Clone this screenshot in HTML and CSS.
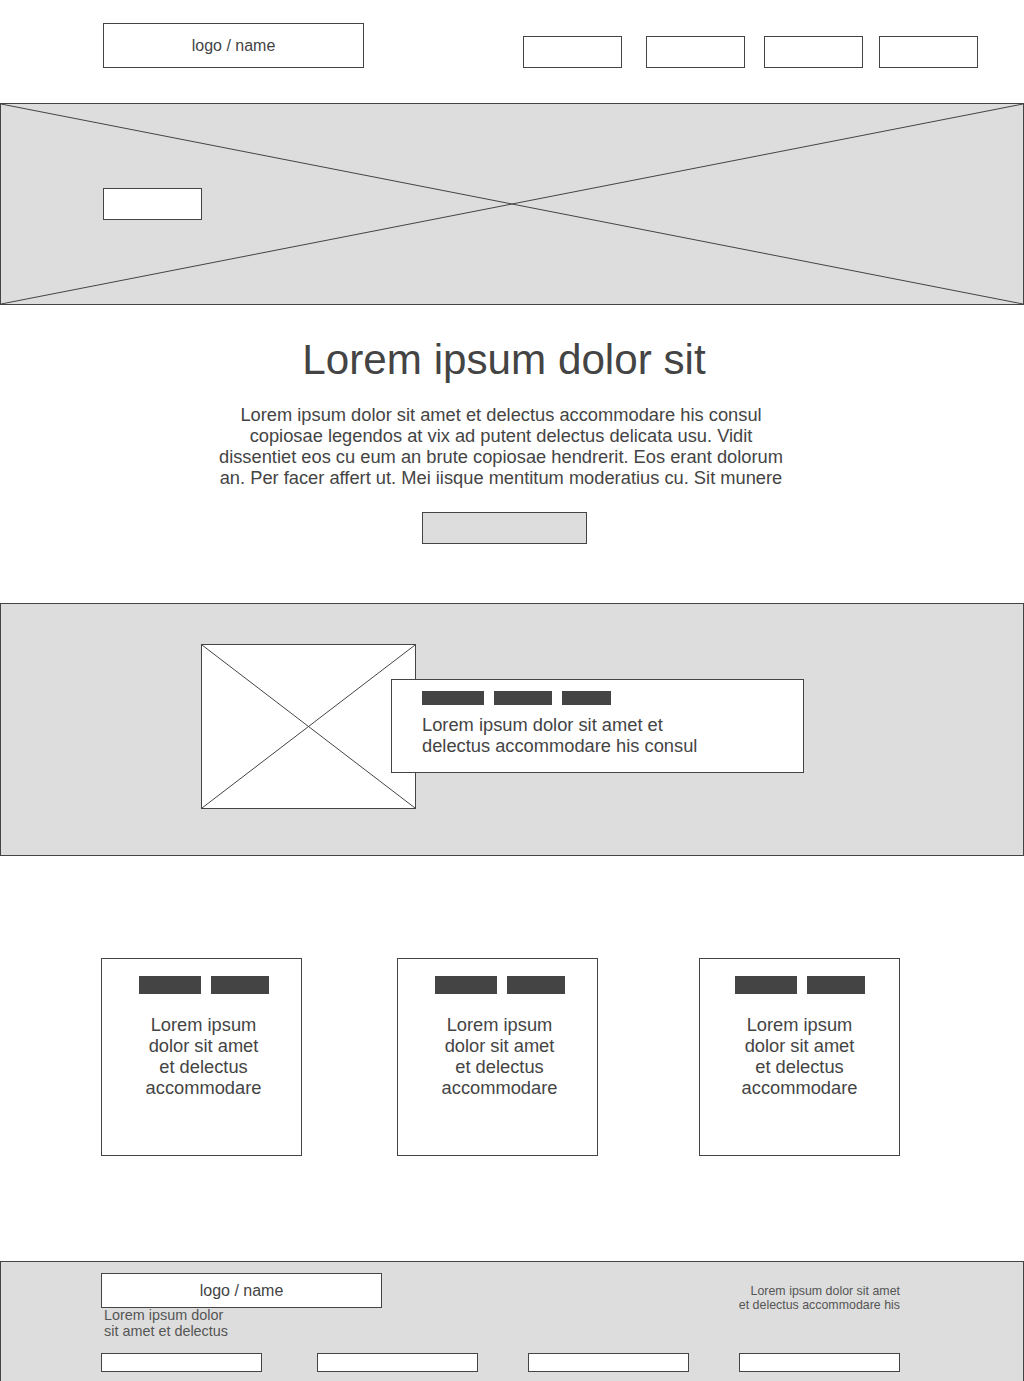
FILE: index.html
```html
<!DOCTYPE html>
<html lang="en">
<head>
  <meta charset="UTF-8" />
  <meta name="viewport" content="width=device-width, initial-scale=1.0">
  <title>Wireframe</title>
  <link rel="stylesheet" href="styles.css">
</head>
<body>
  <header class="top">
    <div class="logo-box">logo / name</div>
    <nav class="nav">
      <span class="nav-item"></span>
      <span class="nav-item"></span>
      <span class="nav-item"></span>
      <span class="nav-item"></span>
    </nav>
  </header>

  <section class="hero">
    <svg class="cross" viewBox="0 0 100 100" preserveAspectRatio="none">
      <line x1="0" y1="0" x2="100" y2="100" vector-effect="non-scaling-stroke" />
      <line x1="100" y1="0" x2="0" y2="100" vector-effect="non-scaling-stroke" />
    </svg>
    <div class="hero-btn"></div>
  </section>

  <section class="intro">
    <h1>Lorem ipsum dolor sit</h1>
    <p>Lorem ipsum dolor sit amet et delectus accommodare his consul copiosae legendos at vix ad putent delectus delicata usu. Vidit dissentiet eos cu eum an brute copiosae hendrerit. Eos erant dolorum an. Per facer affert ut. Mei iisque mentitum moderatius cu. Sit munere</p>
    <div class="intro-btn"></div>
  </section>

  <section class="feature">
    <div class="feature-img">
      <svg class="cross" viewBox="0 0 100 100" preserveAspectRatio="none">
        <line x1="0" y1="0" x2="100" y2="100" vector-effect="non-scaling-stroke" />
        <line x1="100" y1="0" x2="0" y2="100" vector-effect="non-scaling-stroke" />
      </svg>
    </div>
    <div class="feature-card">
      <div class="tags">
        <span class="tag tag-a"></span>
        <span class="tag tag-b"></span>
        <span class="tag tag-c"></span>
      </div>
      <p>Lorem ipsum dolor sit amet et<br>delectus accommodare his consul</p>
    </div>
  </section>

  <section class="cards">
    <div class="card">
      <div class="tags">
        <span class="tag tag-a"></span>
        <span class="tag tag-b"></span>
      </div>
      <p>Lorem ipsum dolor sit amet et delectus accommodare</p>
    </div>
    <div class="card">
      <div class="tags">
        <span class="tag tag-a"></span>
        <span class="tag tag-b"></span>
      </div>
      <p>Lorem ipsum dolor sit amet et delectus accommodare</p>
    </div>
    <div class="card">
      <div class="tags">
        <span class="tag tag-a"></span>
        <span class="tag tag-b"></span>
      </div>
      <p>Lorem ipsum dolor sit amet et delectus accommodare</p>
    </div>
  </section>

  <footer class="footer">
    <div class="footer-top">
      <div>
        <div class="logo-box footer-logo">logo / name</div>
        <div class="footer-note">Lorem ipsum dolor<br>sit amet et delectus</div>
      </div>
      <div class="footer-right">Lorem ipsum dolor sit amet<br>et delectus accommodare his</div>
    </div>
    <div class="footer-links">
      <span class="footer-link"></span>
      <span class="footer-link"></span>
      <span class="footer-link"></span>
      <span class="footer-link"></span>
    </div>
  </footer>
</body>
</html>
```

FILE: styles.css
```css
body {
  margin: 0;
  font-family: "Liberation Sans", Arial, sans-serif;
  color: #444;
  background: #fff;
  overflow: hidden;
}

/* header */
.top {
  height: 103px;
  box-sizing: border-box;
  padding: 23px 46px 35px 103px;
  display: flex;
  align-items: flex-end;
  justify-content: space-between;
}

.logo-box {
  width: 261px;
  height: 45px;
  box-sizing: border-box;
  border: 1px solid #444;
  background: #fff;
  display: flex;
  align-items: center;
  justify-content: center;
  font-size: 16px;
}

.nav {
  display: flex;
}

.nav-item {
  width: 99px;
  height: 32px;
  box-sizing: border-box;
  border: 1px solid #444;
  margin-left: 19px;
}

.nav-item:first-child { margin-left: 0; }
.nav-item:nth-child(2) { margin-left: 24px; }
.nav-item:nth-child(4) { margin-left: 16px; }

/* placeholder cross */
.cross {
  position: absolute;
  top: 0;
  left: 0;
  width: 100%;
  height: 100%;
}

.cross line {
  stroke: #444;
  stroke-width: 1;
}

/* hero */
.hero {
  position: relative;
  height: 202px;
  box-sizing: border-box;
  background: #ddd;
  border: 1px solid #444;
  padding: 84px 0 0 102px;
}

.hero-btn {
  position: relative;
  width: 99px;
  height: 32px;
  box-sizing: border-box;
  background: #fff;
  border: 1px solid #444;
}

/* intro */
.intro {
  text-align: center;
  padding: 31px 16px 0 0;
}

.intro h1 {
  margin: 0;
  font-size: 42.2px;
  font-weight: normal;
  line-height: 48px;
}

.intro p {
  margin: 20px auto 0;
  max-width: 570px;
  padding-right: 6px;
  font-size: 18.3px;
  line-height: 21px;
}

.intro-btn {
  width: 165px;
  height: 32px;
  box-sizing: border-box;
  margin: 24px auto 0;
  background: #ddd;
  border: 1px solid #444;
}

/* feature band */
.feature {
  margin-top: 59px;
  height: 253px;
  box-sizing: border-box;
  background: #ddd;
  border: 1px solid #444;
  padding: 40px 0 0 200px;
  display: flex;
  align-items: flex-start;
}

.feature-img {
  position: relative;
  width: 215px;
  height: 165px;
  box-sizing: border-box;
  background: #fff;
  border: 1px solid #444;
  flex-shrink: 0;
}

.feature-card {
  position: relative;
  width: 413px;
  height: 94px;
  box-sizing: border-box;
  margin: 35px 0 0 -25px;
  padding: 11px 30px 0;
  background: #fff;
  border: 1px solid #444;
}

.feature-card p {
  margin: 9px 0 0;
  font-size: 18.3px;
  line-height: 21px;
}

.tags {
  display: flex;
  gap: 10px;
}

.tag {
  height: 14px;
  background: #444;
}

.tag-a { width: 62px; }
.tag-b { width: 58px; }
.tag-c { width: 49px; }

/* cards */
.cards {
  display: flex;
  gap: 95px;
  margin-top: 102px;
  padding-left: 101px;
}

.card {
  width: 201px;
  height: 198px;
  box-sizing: border-box;
  border: 1px solid #444;
  padding: 17px 0 0 4px;
  text-align: center;
}

.card:last-child {
  margin-left: 6px;
  padding-left: 0;
}

.card .tags {
  justify-content: center;
}

.card .tag {
  height: 18px;
}

.card p {
  width: 120px;
  margin: 20px auto 0;
  font-size: 18.3px;
  line-height: 21px;
}

/* footer */
.footer {
  margin-top: 105px;
  height: 120px;
  box-sizing: border-box;
  background: #ddd;
  border: 1px solid #444;
  border-bottom: none;
  padding: 11px 123px 0 100px;
}

.footer-top {
  display: flex;
  justify-content: space-between;
  align-items: flex-start;
}

.footer-logo {
  width: 281px;
  height: 35px;
}

.footer-note {
  margin: -1px 0 0 3px;
  font-size: 14.4px;
  line-height: 16px;
  color: #555;
}

.footer-right {
  margin-top: 11px;
  text-align: right;
  font-size: 12.4px;
  line-height: 14px;
  color: #555;
}

.footer-links {
  display: flex;
  margin-top: 14px;
}

.footer-link {
  width: 161px;
  height: 19px;
  box-sizing: border-box;
  background: #fff;
  border: 1px solid #444;
  margin-left: 50px;
}

.footer-link:first-child { margin-left: 0; }
.footer-link:nth-child(2) { margin-left: 55px; }
```
